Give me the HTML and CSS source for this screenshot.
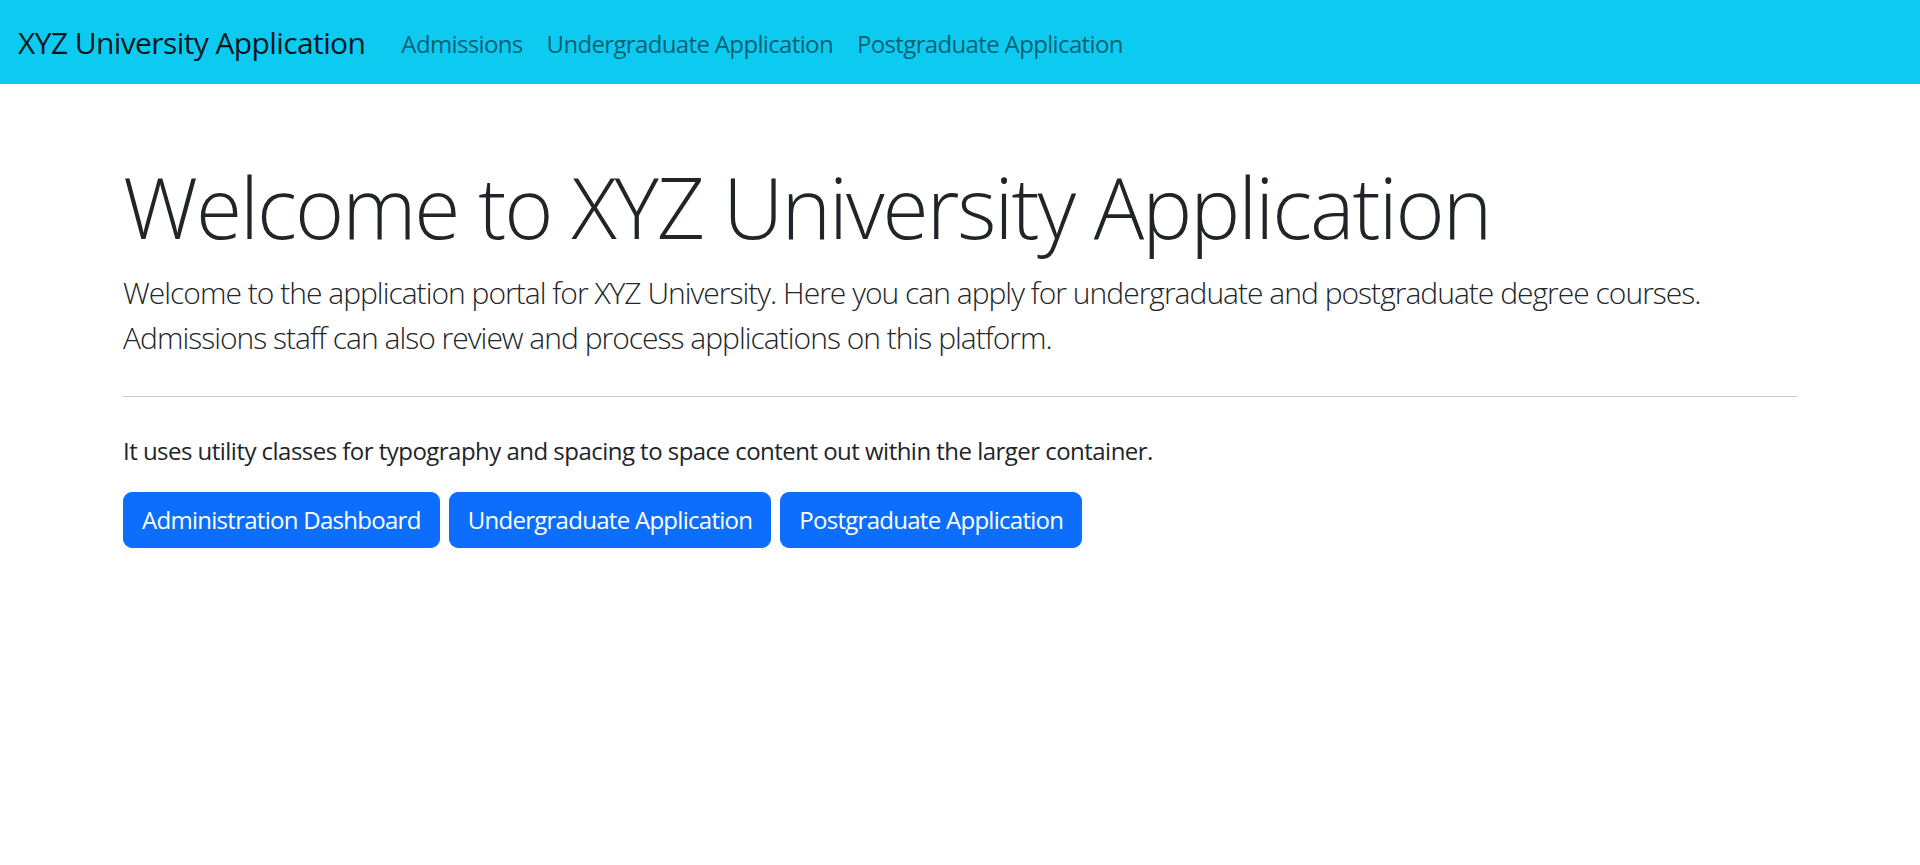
FILE: index.html
```html
<!DOCTYPE html>
<html lang="en">
<head>
<meta charset="utf-8">
<title>XYZ University Application</title>
<link rel="stylesheet" href="styles.css">
</head>
<body>
<nav class="navbar">
  <div class="navbar-inner">
    <a class="brand" href="#">XYZ University Application</a>
    <ul class="nav">
      <li><a class="nav-link" href="#">Admissions</a></li>
      <li><a class="nav-link" href="#">Undergraduate Application</a></li>
      <li><a class="nav-link" href="#">Postgraduate Application</a></li>
    </ul>
  </div>
</nav>
<main class="container">
  <div class="hero">
    <h1 class="display">Welcome to XYZ University Application</h1>
    <p class="lead">Welcome to the application portal for XYZ University. Here you can apply for undergraduate and postgraduate degree courses. Admissions staff can also review and process applications on this platform.</p>
    <hr class="divider">
    <p class="text">It uses utility classes for typography and spacing to space content out within the larger container.</p>
    <div class="actions">
      <a class="btn" href="#">Administration Dashboard</a>
      <a class="btn" href="#">Undergraduate Application</a>
      <a class="btn" href="#">Postgraduate Application</a>
    </div>
  </div>
</main>
</body>
</html>
```

FILE: styles.css
```css
* { box-sizing: border-box; }
html, body { margin: 0; padding: 0; }
body {
  font-family: "Open Sans", "Noto Sans", sans-serif;
  font-size: 24px;
  line-height: 1.5;
  letter-spacing: -0.022em;
  color: #212529;
  background: #fff;
}
a { text-decoration: none; }

.navbar {
  background: #0dcaf0;
  padding: 12px 0;
}
.navbar-inner {
  display: flex;
  align-items: center;
  padding: 0 18px;
}
.brand {
  font-size: 30px;
  line-height: 45px;
  padding: 7.5px 0;
  margin-right: 24px;
  letter-spacing: -0.02em;
  color: rgba(0, 0, 0, 0.9);
}
.nav {
  display: flex;
  list-style: none;
  margin: 0;
  padding: 0;
}
.nav-link {
  display: block;
  padding: 14px 12px 10px;
  font-size: 24px;
  line-height: 36px;
  letter-spacing: -0.027em;
  color: rgba(0, 0, 0, 0.55);
}

.container {
  width: 1710px;
  margin: 0 auto;
  padding: 0 18px;
}
.hero {
  padding-top: 73px;
}
.display {
  margin: 0 0 12px;
  font-size: 84px;
  font-weight: 300;
  line-height: 1.2;
  letter-spacing: -0.024em;
}
.lead {
  margin: 0;
  font-size: 30px;
  font-weight: 300;
  line-height: 45px;
  letter-spacing: -0.033em;
}
.divider {
  margin: 36px 0;
  border: 0;
  border-top: 1px solid #c8c9ca;
  height: 0;
}
.text {
  margin: 0 0 23px;
}
.actions {
  display: flex;
  gap: 9px;
}
.btn {
  display: inline-block;
  padding: 9px 18px;
  border: 1px solid #0d6efd;
  border-radius: 9px;
  background: #0d6efd;
  color: #fff;
  font-size: 24px;
  line-height: 36px;
  letter-spacing: -0.03em;
}
```
